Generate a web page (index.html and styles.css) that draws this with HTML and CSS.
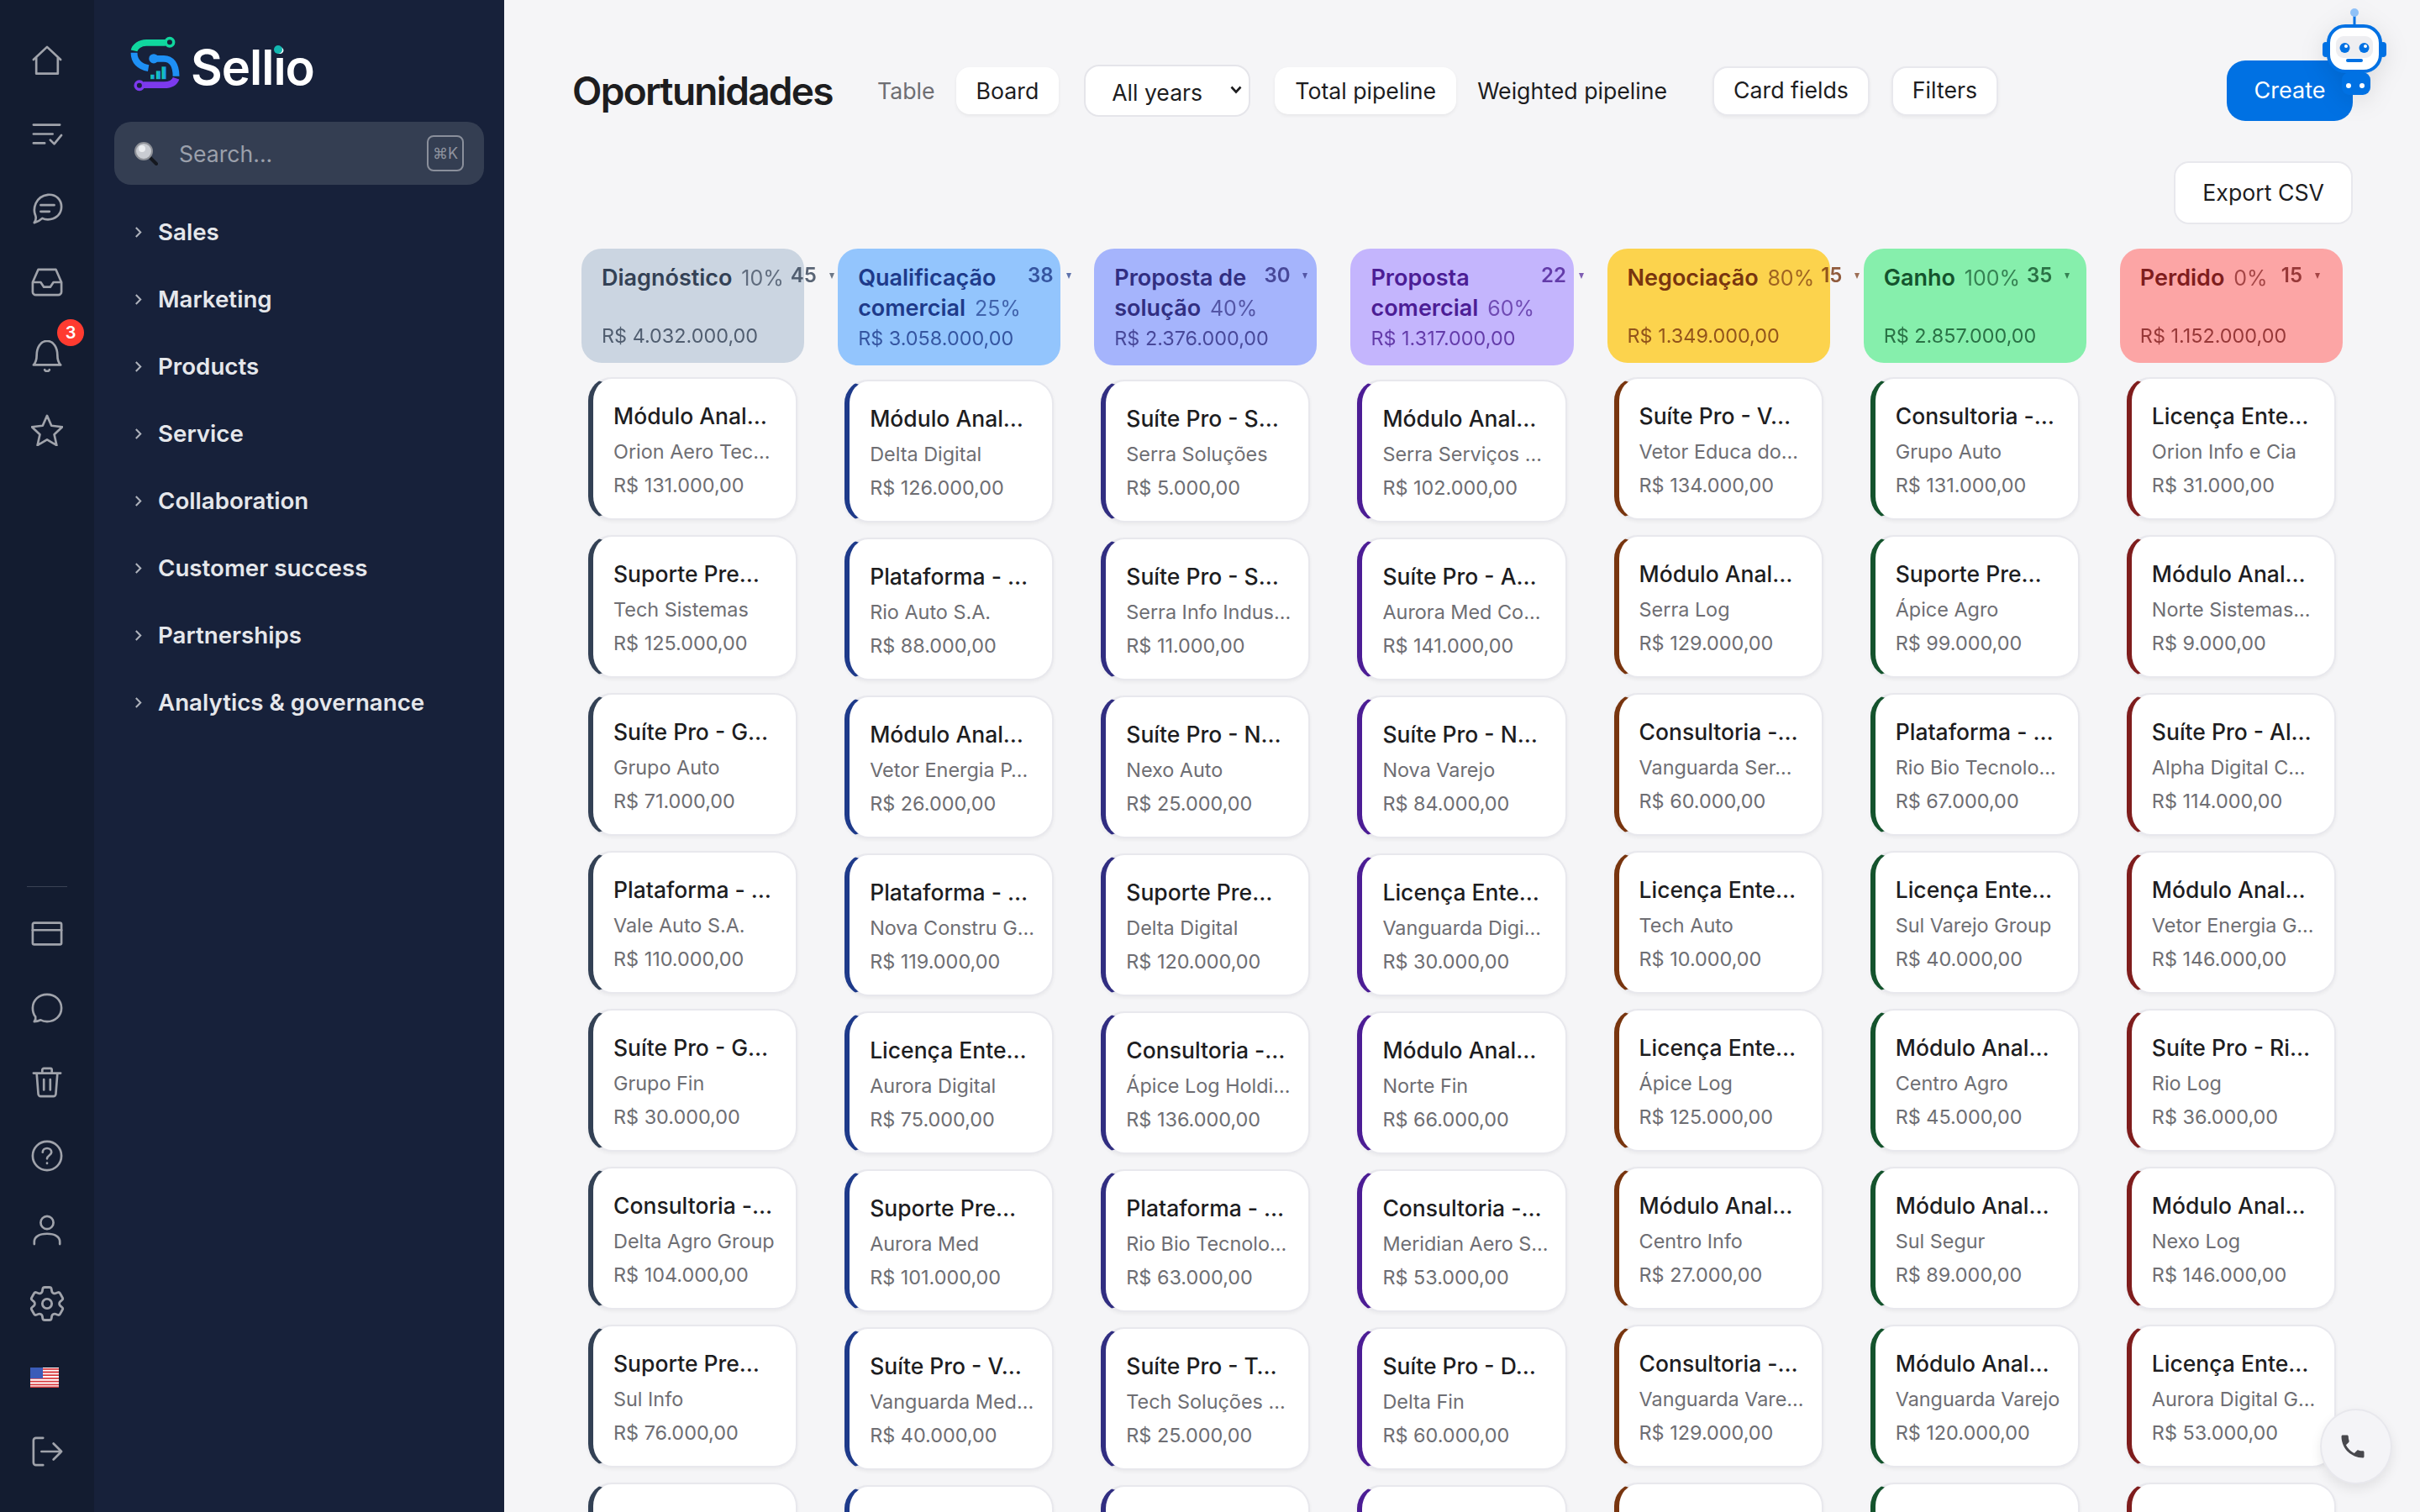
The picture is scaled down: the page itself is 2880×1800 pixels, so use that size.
FILE: index.html
```html
<!DOCTYPE html>
<html lang="pt-BR">
<head>
	<meta charset="UTF-8">
	<title>Oportunidades - Sellio</title>
	<link rel="stylesheet" href="styles.css">
</head>
<body>
<div class="app">
	<!-- icon rail -->
	<nav class="rail">
		<div class="rail-group">
			<a class="rail-btn"><svg viewBox="0 0 40 40"><path d="M3 19 20 3l17 16M6.500 16v20.500h27V16"/></svg></a>
			<a class="rail-btn"><svg viewBox="0 0 40 40"><path d="M3 8h33M3 19.500h24M3 31h14M24 27l5 5 9-11"/></svg></a>
			<a class="rail-btn"><svg viewBox="0 0 40 40"><path d="M4 38c2-3 2.500-6 1.500-9C2 21 5 5 21 3c11-1 17 7 17 15 0 10-8 16-17 16-3 0-5-.5-7-1.500-3 3-6 4.500-10 5.500z"/><path d="M12 16h17M12 24h11"/></svg></a>
			<a class="rail-btn"><svg viewBox="0 0 40 40"><path d="M2 20 9 4h22l7 16v12a4 4 0 0 1-4 4H6a4 4 0 0 1-4-4zM2 20h10l4 6h8l4-6h10"/></svg></a>
			<a class="rail-btn"><svg viewBox="0 0 40 40"><path d="M3 31c3-3 4-6 4-12C7 9 12 1 20 1s13 8 13 18c0 6 1 9 4 12zM17 37c1 2.500 5 2.500 6 0"/></svg><span class="badge">3</span></a>
			<a class="rail-btn"><svg viewBox="0 0 40 40"><path d="m20 2 5.500 12.500L39 16l-10 9.500 3 13.500-12-7-12 7 3-13.500L1 16l13.500-1.500z"/></svg></a>
		</div>
		<div class="rail-group rail-bottom">
			<div class="rail-line"></div>
			<a class="rail-btn"><svg viewBox="0 0 40 40"><rect x="2" y="6" width="36" height="27" rx="2"/><path d="M2 15h36"/></svg></a>
			<a class="rail-btn"><svg viewBox="0 0 40 40"><path d="M4 37c1.500-2 2-4 1.500-6C3 28 2 24 2 20 2 10 10 3 20 3s18 7 18 17-8 17-18 17c-3 0-6-.7-8-2-2 1-5 2-8 2z"/></svg></a>
			<a class="rail-btn"><svg viewBox="0 0 40 40"><path d="M3 9h34M14 8V5a2 2 0 0 1 2-2h8a2 2 0 0 1 2 2v3M7 9l2 26a3 3 0 0 0 3 3h16a3 3 0 0 0 3-3l2-26M16 17v13M24 17v13"/></svg></a>
			<a class="rail-btn"><svg viewBox="0 0 40 40"><circle cx="20" cy="20" r="18"/><path d="M14.500 15.500c0-3 2.500-5 5.500-5s5.500 2 5.500 5c0 4-5.500 4-5.500 8"/><path d="M20 29v.5"/></svg></a>
			<a class="rail-btn"><svg viewBox="0 0 40 40"><circle cx="20" cy="11" r="8"/><path d="M4 38v-3c0-6 6-10 16-10s16 4 16 10v3"/></svg></a>
			<a class="rail-btn rail-gear"><svg viewBox="0 0 24 24"><path d="M9.594 3.940c.09-.542.56-.94 1.110-.94h2.593c.55 0 1.020.398 1.110.94l.213 1.281c.063.374.313.686.645.87.074.04.147.083.22.127.325.196.72.257 1.075.124l1.217-.456a1.125 1.125 0 0 1 1.370.49l1.296 2.247a1.125 1.125 0 0 1-.26 1.431l-1.003.827c-.293.241-.438.613-.43.992a7.723 7.723 0 0 1 0 .255c-.008.378.137.75.43.991l1.004.827c.424.35.534.955.26 1.430l-1.298 2.247a1.125 1.125 0 0 1-1.369.491l-1.217-.456c-.355-.133-.75-.072-1.076.124a6.470 6.470 0 0 1-.22.128c-.331.183-.581.495-.644.869l-.213 1.281c-.09.543-.56.94-1.110.94h-2.594c-.55 0-1.019-.398-1.110-.94l-.213-1.281c-.062-.374-.312-.686-.644-.87a6.520 6.520 0 0 1-.22-.127c-.325-.196-.72-.257-1.076-.124l-1.217.456a1.125 1.125 0 0 1-1.369-.49l-1.297-2.247a1.125 1.125 0 0 1 .26-1.431l1.004-.827c.292-.24.437-.613.43-.991a6.932 6.932 0 0 1 0-.255c.007-.38-.138-.751-.43-.992l-1.004-.827a1.125 1.125 0 0 1-.26-1.430l1.297-2.247a1.125 1.125 0 0 1 1.370-.491l1.216.456c.356.133.751.072 1.076-.124.072-.044.146-.086.22-.128.332-.183.582-.495.644-.869l.214-1.280Z"/><circle cx="12" cy="12" r="2.600"/></svg></a>
			<a class="rail-btn rail-flag">
				<svg viewBox="0 0 34 24" preserveAspectRatio="none">
					<rect width="34" height="24" fill="#fff"/>
					<path d="M0 1.800h34M0 5.500h34M0 9.200h34M0 12.900h34M0 16.600h34M0 20.300h34M0 23.400h34" stroke="#d8383c" stroke-width="1.800"/>
					<rect width="15" height="13" fill="#3b5cb8"/>
				</svg>
			</a>
			<a class="rail-btn"><svg viewBox="0 0 40 40"><path d="M15 3H6a3 3 0 0 0-3 3v28a3 3 0 0 0 3 3h9M13 20h25M28 10l10 10-10 10"/></svg></a>
		</div>
	</nav>

	<!-- sidebar -->
	<aside class="side">
		<div class="logo">
			<svg class="logo-mark" viewBox="45 30 190 215">
				<defs>
					<linearGradient id="barfill" x1="0" y1="0" x2="1" y2="0">
						<stop offset="0" stop-color="#10d79e"/>
						<stop offset="1" stop-color="#1e90f5"/>
					</linearGradient>
				</defs>
				<g fill="none" stroke-width="25">
					<path d="M176 58H104C80 58 62 72 58 88" stroke="#10d79e"/>
					<circle cx="192" cy="56" r="15" stroke="#10d79e" stroke-width="11"/>
					<path d="M58 96C58 128 78 148 112 154" stroke="#1e90f5"/>
					<path d="M132 118H170C198 118 216 140 216 184" stroke="#1e90f5"/>
					<path d="M216 192C210 210 190 217 170 217H94" stroke="#7c3aed"/>
					<circle cx="78" cy="219" r="15" stroke="#7c3aed" stroke-width="11"/>
				</g>
				<circle cx="132" cy="118" r="18" fill="#1e90f5"/>
				<rect x="120" y="178" width="14" height="17" fill="url(#barfill)"/>
				<rect x="141" y="164" width="16" height="31" fill="url(#barfill)"/>
				<rect x="162" y="148" width="16" height="47" fill="url(#barfill)"/>
			</svg>
			<span class="logo-text">Sellio<i class="logo-dot"></i></span>
		</div>
		<div class="search">
			<svg class="search-ico" viewBox="0 0 28 28">
				<path d="m17 17 9 9" stroke="#15181f" stroke-width="4" stroke-linecap="round"/>
				<circle cx="11" cy="11" r="10" fill="#c9ccd2" stroke="#8d9097" stroke-width="2"/>
				<circle cx="9" cy="8" r="4" fill="#eceef1"/>
			</svg>
			<span class="search-text">Search...</span>
			<span class="kbd">⌘K</span>
		</div>
		<ul class="menu">
			<li><svg viewBox="0 0 10 16"><path d="m2 2 6 6-6 6"/></svg>Sales</li>
			<li><svg viewBox="0 0 10 16"><path d="m2 2 6 6-6 6"/></svg>Marketing</li>
			<li><svg viewBox="0 0 10 16"><path d="m2 2 6 6-6 6"/></svg>Products</li>
			<li><svg viewBox="0 0 10 16"><path d="m2 2 6 6-6 6"/></svg>Service</li>
			<li><svg viewBox="0 0 10 16"><path d="m2 2 6 6-6 6"/></svg>Collaboration</li>
			<li><svg viewBox="0 0 10 16"><path d="m2 2 6 6-6 6"/></svg>Customer success</li>
			<li><svg viewBox="0 0 10 16"><path d="m2 2 6 6-6 6"/></svg>Partnerships</li>
			<li><svg viewBox="0 0 10 16"><path d="m2 2 6 6-6 6"/></svg>Analytics &amp; governance</li>
		</ul>
	</aside>

	<main class="main">
		<div class="bar">
			<h1 class="title">Oportunidades</h1>
			<div class="seg seg-view">
				<a class="seg-item muted">Table</a>
				<a class="seg-item on">Board</a>
			</div>
			<div class="years-wrap">
				<select class="years"><option>All years</option></select>
				<svg class="years-arrow" viewBox="0 0 14 10"><path d="m1.500 1.500 5.500 6 5.500-6"/></svg>
			</div>
			<div class="seg seg-pipe">
				<a class="seg-item on">Total pipeline</a>
				<a class="seg-item">Weighted pipeline</a>
			</div>
			<a class="btn btn-fields">Card fields</a>
			<a class="btn btn-filters">Filters</a>
			<a class="create">Create</a>
		</div>
		<div class="export-row"><a class="btn btn-export">Export CSV</a></div>

		<div class="board">
			<section class="col col-slate">
				<header class="stage">
					<div class="stage-top">
						<div class="stage-name">Diagnóstico <span class="pct">10%</span></div>
						<span class="count">45</span><i class="caret"></i>
					</div>
					<div class="stage-sum">R$ 4.032.000,00</div>
				</header>
				<div class="card"><div class="c-name">Módulo Anal…</div><div class="c-org">Orion Aero Tec…</div><div class="c-val">R$ 131.000,00</div></div>
				<div class="card"><div class="c-name">Suporte Pre…</div><div class="c-org">Tech Sistemas</div><div class="c-val">R$ 125.000,00</div></div>
				<div class="card"><div class="c-name">Suíte Pro - G…</div><div class="c-org">Grupo Auto</div><div class="c-val">R$ 71.000,00</div></div>
				<div class="card"><div class="c-name">Plataforma - …</div><div class="c-org">Vale Auto S.A.</div><div class="c-val">R$ 110.000,00</div></div>
				<div class="card"><div class="c-name">Suíte Pro - G…</div><div class="c-org">Grupo Fin</div><div class="c-val">R$ 30.000,00</div></div>
				<div class="card"><div class="c-name">Consultoria -…</div><div class="c-org">Delta Agro Group</div><div class="c-val">R$ 104.000,00</div></div>
				<div class="card"><div class="c-name">Suporte Pre…</div><div class="c-org">Sul Info</div><div class="c-val">R$ 76.000,00</div></div>
				<div class="card"><div class="c-name">Suíte Pro - C…</div></div>
			</section>

			<section class="col col-blue">
				<header class="stage">
					<div class="stage-top">
						<div class="stage-name">Qualificação<br>comercial <span class="pct">25%</span></div>
						<span class="count">38</span><i class="caret"></i>
					</div>
					<div class="stage-sum">R$ 3.058.000,00</div>
				</header>
				<div class="card"><div class="c-name">Módulo Anal…</div><div class="c-org">Delta Digital</div><div class="c-val">R$ 126.000,00</div></div>
				<div class="card"><div class="c-name">Plataforma - …</div><div class="c-org">Rio Auto S.A.</div><div class="c-val">R$ 88.000,00</div></div>
				<div class="card"><div class="c-name">Módulo Anal…</div><div class="c-org">Vetor Energia P…</div><div class="c-val">R$ 26.000,00</div></div>
				<div class="card"><div class="c-name">Plataforma - …</div><div class="c-org">Nova Constru G…</div><div class="c-val">R$ 119.000,00</div></div>
				<div class="card"><div class="c-name">Licença Ente…</div><div class="c-org">Aurora Digital</div><div class="c-val">R$ 75.000,00</div></div>
				<div class="card"><div class="c-name">Suporte Pre…</div><div class="c-org">Aurora Med</div><div class="c-val">R$ 101.000,00</div></div>
				<div class="card"><div class="c-name">Suíte Pro - V…</div><div class="c-org">Vanguarda Med…</div><div class="c-val">R$ 40.000,00</div></div>
				<div class="card"></div>
			</section>

			<section class="col col-indigo">
				<header class="stage">
					<div class="stage-top">
						<div class="stage-name">Proposta de<br>solução <span class="pct">40%</span></div>
						<span class="count">30</span><i class="caret"></i>
					</div>
					<div class="stage-sum">R$ 2.376.000,00</div>
				</header>
				<div class="card"><div class="c-name">Suíte Pro - S…</div><div class="c-org">Serra Soluções</div><div class="c-val">R$ 5.000,00</div></div>
				<div class="card"><div class="c-name">Suíte Pro - S…</div><div class="c-org">Serra Info Indus…</div><div class="c-val">R$ 11.000,00</div></div>
				<div class="card"><div class="c-name">Suíte Pro - N…</div><div class="c-org">Nexo Auto</div><div class="c-val">R$ 25.000,00</div></div>
				<div class="card"><div class="c-name">Suporte Pre…</div><div class="c-org">Delta Digital</div><div class="c-val">R$ 120.000,00</div></div>
				<div class="card"><div class="c-name">Consultoria -…</div><div class="c-org">Ápice Log Holdi…</div><div class="c-val">R$ 136.000,00</div></div>
				<div class="card"><div class="c-name">Plataforma - …</div><div class="c-org">Rio Bio Tecnolo…</div><div class="c-val">R$ 63.000,00</div></div>
				<div class="card"><div class="c-name">Suíte Pro - T…</div><div class="c-org">Tech Soluções …</div><div class="c-val">R$ 25.000,00</div></div>
				<div class="card"></div>
			</section>

			<section class="col col-violet">
				<header class="stage">
					<div class="stage-top">
						<div class="stage-name">Proposta<br>comercial <span class="pct">60%</span></div>
						<span class="count">22</span><i class="caret"></i>
					</div>
					<div class="stage-sum">R$ 1.317.000,00</div>
				</header>
				<div class="card"><div class="c-name">Módulo Anal…</div><div class="c-org">Serra Serviços …</div><div class="c-val">R$ 102.000,00</div></div>
				<div class="card"><div class="c-name">Suíte Pro - A…</div><div class="c-org">Aurora Med Co…</div><div class="c-val">R$ 141.000,00</div></div>
				<div class="card"><div class="c-name">Suíte Pro - N…</div><div class="c-org">Nova Varejo</div><div class="c-val">R$ 84.000,00</div></div>
				<div class="card"><div class="c-name">Licença Ente…</div><div class="c-org">Vanguarda Digi…</div><div class="c-val">R$ 30.000,00</div></div>
				<div class="card"><div class="c-name">Módulo Anal…</div><div class="c-org">Norte Fin</div><div class="c-val">R$ 66.000,00</div></div>
				<div class="card"><div class="c-name">Consultoria -…</div><div class="c-org">Meridian Aero S…</div><div class="c-val">R$ 53.000,00</div></div>
				<div class="card"><div class="c-name">Suíte Pro - D…</div><div class="c-org">Delta Fin</div><div class="c-val">R$ 60.000,00</div></div>
				<div class="card"></div>
			</section>

			<section class="col col-amber">
				<header class="stage">
					<div class="stage-top">
						<div class="stage-name">Negociação <span class="pct">80%</span></div>
						<span class="count">15</span><i class="caret"></i>
					</div>
					<div class="stage-sum">R$ 1.349.000,00</div>
				</header>
				<div class="card"><div class="c-name">Suíte Pro - V…</div><div class="c-org">Vetor Educa do…</div><div class="c-val">R$ 134.000,00</div></div>
				<div class="card"><div class="c-name">Módulo Anal…</div><div class="c-org">Serra Log</div><div class="c-val">R$ 129.000,00</div></div>
				<div class="card"><div class="c-name">Consultoria -…</div><div class="c-org">Vanguarda Ser…</div><div class="c-val">R$ 60.000,00</div></div>
				<div class="card"><div class="c-name">Licença Ente…</div><div class="c-org">Tech Auto</div><div class="c-val">R$ 10.000,00</div></div>
				<div class="card"><div class="c-name">Licença Ente…</div><div class="c-org">Ápice Log</div><div class="c-val">R$ 125.000,00</div></div>
				<div class="card"><div class="c-name">Módulo Anal…</div><div class="c-org">Centro Info</div><div class="c-val">R$ 27.000,00</div></div>
				<div class="card"><div class="c-name">Consultoria -…</div><div class="c-org">Vanguarda Vare…</div><div class="c-val">R$ 129.000,00</div></div>
				<div class="card"><div class="c-name">Suíte Pro - O…</div></div>
			</section>

			<section class="col col-green">
				<header class="stage">
					<div class="stage-top">
						<div class="stage-name">Ganho <span class="pct">100%</span></div>
						<span class="count">35</span><i class="caret"></i>
					</div>
					<div class="stage-sum">R$ 2.857.000,00</div>
				</header>
				<div class="card"><div class="c-name">Consultoria -…</div><div class="c-org">Grupo Auto</div><div class="c-val">R$ 131.000,00</div></div>
				<div class="card"><div class="c-name">Suporte Pre…</div><div class="c-org">Ápice Agro</div><div class="c-val">R$ 99.000,00</div></div>
				<div class="card"><div class="c-name">Plataforma - …</div><div class="c-org">Rio Bio Tecnolo…</div><div class="c-val">R$ 67.000,00</div></div>
				<div class="card"><div class="c-name">Licença Ente…</div><div class="c-org">Sul Varejo Group</div><div class="c-val">R$ 40.000,00</div></div>
				<div class="card"><div class="c-name">Módulo Anal…</div><div class="c-org">Centro Agro</div><div class="c-val">R$ 45.000,00</div></div>
				<div class="card"><div class="c-name">Módulo Anal…</div><div class="c-org">Sul Segur</div><div class="c-val">R$ 89.000,00</div></div>
				<div class="card"><div class="c-name">Módulo Anal…</div><div class="c-org">Vanguarda Varejo</div><div class="c-val">R$ 120.000,00</div></div>
				<div class="card"><div class="c-name">Módulo Anal…</div></div>
			</section>

			<section class="col col-red">
				<header class="stage">
					<div class="stage-top">
						<div class="stage-name">Perdido <span class="pct">0%</span></div>
						<span class="count">15</span><i class="caret"></i>
					</div>
					<div class="stage-sum">R$ 1.152.000,00</div>
				</header>
				<div class="card"><div class="c-name">Licença Ente…</div><div class="c-org">Orion Info e Cia</div><div class="c-val">R$ 31.000,00</div></div>
				<div class="card"><div class="c-name">Módulo Anal…</div><div class="c-org">Norte Sistemas…</div><div class="c-val">R$ 9.000,00</div></div>
				<div class="card"><div class="c-name">Suíte Pro - Al…</div><div class="c-org">Alpha Digital C…</div><div class="c-val">R$ 114.000,00</div></div>
				<div class="card"><div class="c-name">Módulo Anal…</div><div class="c-org">Vetor Energia G…</div><div class="c-val">R$ 146.000,00</div></div>
				<div class="card"><div class="c-name">Suíte Pro - Ri…</div><div class="c-org">Rio Log</div><div class="c-val">R$ 36.000,00</div></div>
				<div class="card"><div class="c-name">Módulo Anal…</div><div class="c-org">Nexo Log</div><div class="c-val">R$ 146.000,00</div></div>
				<div class="card"><div class="c-name">Licença Ente…</div><div class="c-org">Aurora Digital G…</div><div class="c-val">R$ 53.000,00</div></div>
				<div class="card"><div class="c-name">Suíte Pro - T…</div></div>
			</section>
		</div>
	</main>
</div>

<!-- floating assistant + phone -->
<svg class="robot" viewBox="0 0 76 105">
	<path d="M38 8v12" stroke="#0071e3" stroke-width="3"/>
	<circle cx="38" cy="5" r="5" fill="#8fc1f7"/>
	<rect x="0" y="40" width="8" height="18" rx="4" fill="#0071e3"/>
	<rect x="68" y="40" width="8" height="18" rx="4" fill="#0071e3"/>
	<rect x="23" y="76" width="34" height="27" rx="9" fill="#0071e3"/>
	<rect x="7" y="21" width="62" height="54" rx="20" fill="#fff" stroke="#0071e3" stroke-width="4"/>
	<rect x="16" y="33" width="44" height="26" rx="9" fill="#eeeef1"/>
	<circle cx="26.500" cy="47" r="6" fill="#0071e3"/>
	<circle cx="49.500" cy="47" r="6" fill="#0071e3"/>
	<circle cx="28" cy="45" r="2" fill="#fff"/>
	<circle cx="51" cy="45" r="2" fill="#fff"/>
	<rect x="28" y="60" width="20" height="4" rx="2" fill="#0071e3"/>
	<circle cx="31" cy="92" r="3" fill="#fff"/>
	<circle cx="47" cy="92" r="3" fill="#fff"/>
</svg>
<a class="phone">
	<svg viewBox="0 0 24 24"><path d="M6.620 10.790c1.440 2.830 3.760 5.140 6.590 6.590l2.200-2.200c.27-.27.67-.36 1.020-.24 1.120.37 2.330.57 3.570.57.55 0 1 .45 1 1V20c0 .55-.45 1-1 1-9.390 0-17-7.610-17-17 0-.55.45-1 1-1h3.500c.55 0 1 .45 1 1 0 1.250.2 2.450.57 3.570.11.35.03.74-.25 1.020l-2.200 2.200z"/></svg>
</a>
</body>
</html>
```

FILE: styles.css
```css
*{
	box-sizing: border-box;
}
html,body{
	margin: 0;
	padding: 0;
	height: 100%;
	overflow: hidden;
}
body{
	font-family: Inter, "Noto Sans", "Liberation Sans", sans-serif;
	background: #f5f5f7;
	color: #1d1d1f;
}
.app{
	display: flex;
	height: 100vh;
}

/* rail */
.rail{
	width: 112px;
	flex: none;
	background: #131c30;
	padding: 48px 0;
	display: flex;
	flex-direction: column;
	justify-content: space-between;
	align-items: center;
}
.rail-group{
	display: flex;
	flex-direction: column;
	align-items: center;
	gap: 40px;
}
.rail-line{
	width: 48px;
	height: 1px;
	background: #3a4254;
	margin-bottom: -8px;
}
.rail-btn{
	position: relative;
	display: flex;
	align-items: center;
	justify-content: center;
	width: 48px;
	height: 48px;
}
.rail-btn svg{
	width: 38px;
	height: 38px;
	fill: none;
	stroke: #a0a3ab;
	stroke-width: 2.800;
	stroke-linecap: round;
	stroke-linejoin: round;
}
.rail-gear svg{
	flex: none;
	width: 52px;
	height: 52px;
	stroke-width: 1.300;
}
.rail-flag{
	justify-content: flex-start;
}
.rail-flag svg{
	width: 34px;
	height: 24px;
	margin-left: 4px;
	stroke: none;
	stroke-linecap: butt;
}
.badge{
	position: absolute;
	top: -20px;
	right: -20px;
	width: 32px;
	height: 32px;
	border-radius: 50%;
	background: #ff3b30;
	color: #fff;
	font-size: 20px;
	font-weight: 600;
	line-height: 32px;
	text-align: center;
}

/* sidebar */
.side{
	width: 488px;
	flex: none;
	background: #17213a;
	padding: 0 24px;
}
.logo{
	height: 145px;
	padding: 42px 0 0 19px;
	display: flex;
	align-items: flex-start;
	gap: 11px;
}
.logo-mark{
	width: 61px;
	height: 68px;
	flex: none;
}
.logo-text{
	position: relative;
	margin-top: 3px;
	font-size: 58px;
	font-weight: 600;
	line-height: 70px;
	letter-spacing: -1px;
	color: #fff;
}
.logo-dot{
	position: absolute;
	right: 38px;
	top: 9px;
	width: 10px;
	height: 10px;
	border-radius: 50%;
	background: #12b7b0;
}
.search{
	height: 75px;
	border-radius: 20px;
	background: #343e52;
	display: flex;
	align-items: center;
	padding: 0 24px;
}
.search-ico{
	width: 28px;
	height: 28px;
	flex: none;
}
.search-text{
	margin-left: 25px;
	font-size: 26.600px;
	color: #9ba0ab;
	flex: 1;
}
.kbd{
	width: 44px;
	height: 43px;
	border: 2px solid #8a8f9b;
	border-radius: 8px;
	font-size: 18px;
	line-height: 39px;
	text-align: center;
	color: #8f939f;
}
.menu{
	list-style: none;
	margin: 16px 0 0;
	padding: 0;
}
.menu li{
	height: 80px;
	display: flex;
	align-items: center;
	gap: 19px;
	padding-left: 24px;
	font-size: 27.700px;
	font-weight: 600;
	color: #e5e7eb;
}
.menu svg{
	width: 9px;
	height: 15px;
	flex: none;
	fill: none;
	stroke: #aeb2bb;
	stroke-width: 2.300;
}

/* main */
.main{
	flex: 1;
	min-width: 0;
	padding: 72px 80px 0 81px;
	overflow: hidden;
}
.bar{
	display: flex;
	align-items: center;
	height: 72px;
}
.title{
	margin: 0;
	font-size: 46px;
	font-weight: 600;
	letter-spacing: -1.700px;
	color: #1d1d1f;
	white-space: nowrap;
}
.seg{
	display: flex;
	gap: 1px;
}
.seg-view{
	margin-left: 29px;
}
.seg-pipe{
	margin-left: 29px;
}
.seg-item{
	height: 56px;
	line-height: 56px;
	padding: 0 24px;
	border-radius: 16px;
	font-size: 26.700px;
	white-space: nowrap;
}
.seg-item.on{
	background: #fff;
	box-shadow: 0 2px 4px rgba(0,0,0,0.06);
}
.muted{
	color: #6e6e73;
}
.years-wrap{
	position: relative;
	margin-left: 30px;
	height: 62px;
}
.years{
	appearance: none;
	display: block;
	width: 198px;
	height: 62px;
	padding: 4px 0 0 31px;
	border: 2px solid #e5e5ea;
	border-radius: 18px;
	background: #fff;
	font: 26.600px Inter, sans-serif;
	color: #1d1d1f;
}
.years-arrow{
	position: absolute;
	right: 10px;
	top: 25px;
	width: 14px;
	height: 10px;
	fill: none;
	stroke: #1d1d1f;
	stroke-width: 2.600;
}
.btn{
	display: block;
	border: 2px solid #e8e8ed;
	border-radius: 18px;
	background: #fff;
	font-size: 26.700px;
	white-space: nowrap;
}
.btn-fields,.btn-filters{
	height: 59px;
	line-height: 53px;
	padding: 0 23px;
	box-shadow: 0 2px 4px rgba(0,0,0,0.05);
}
.btn-fields{
	margin-left: 30px;
}
.btn-filters{
	margin-left: 26px;
}
.create{
	margin-left: auto;
	width: 150px;
	height: 72px;
	line-height: 72px;
	text-align: center;
	border-radius: 22px;
	background: #0071e3;
	color: #fff;
	font-size: 27px;
}
.export-row{
	display: flex;
	justify-content: flex-end;
	margin-top: 48px;
}
.btn-export{
	height: 75px;
	line-height: 71px;
	padding: 0 32px;
}

/* board */
.board{
	display: grid;
	grid-template-columns: repeat(7, 1fr);
	gap: 40px;
	margin: 29px 12px 0 11px;
	align-items: start;
}
.col{
	display: flex;
	flex-direction: column;
	gap: 18px;
	min-width: 0;
}
.stage{
	margin-bottom: -1px;
	padding: 17px 24px 16px;
	border-radius: 24px;
	background: var(--bg);
	color: var(--ink);
}
.stage-top{
	display: flex;
	align-items: flex-start;
	min-height: 69px;
	white-space: nowrap;
}
.stage-name{
	flex: none;
	min-width: 160px;
	font-size: 27px;
	font-weight: 600;
	line-height: 36px;
}
.pct{
	margin-left: 4px;
	font-size: 25px;
	font-weight: 400;
	opacity: 0.7;
}
.count{
	flex: none;
	margin-left: 8px;
	font-size: 24px;
	font-weight: 600;
	line-height: 30px;
	opacity: 0.8;
}
.caret{
	flex: none;
	margin: 12px 0 0 15px;
	width: 0;
	height: 0;
	border-left: 3.500px solid transparent;
	border-right: 3.500px solid transparent;
	border-top: 7px solid var(--ink);
	opacity: 0.7;
}
.stage-sum{
	margin-top: 2px;
	font-size: 23.400px;
	line-height: 32px;
	opacity: 0.8;
}
.card{
	flex: none;
	height: 170px;
	margin: 0 8px;
	padding: 26px 12px 0 24px;
	background: #fff;
	border: 2px solid #e8e8ed;
	border-left: 6px solid var(--ink);
	border-radius: 28px;
	box-shadow: 0 2px 4px rgba(0,0,0,0.05);
	white-space: nowrap;
	overflow: hidden;
}
.c-name{
	font-size: 26.500px;
	font-weight: 500;
	line-height: 36px;
}
.c-org{
	margin-top: 9px;
	font-size: 23.400px;
	line-height: 32px;
	color: #6e6e73;
}
.c-val{
	margin-top: 8px;
	font-size: 23.400px;
	line-height: 32px;
	color: #6e6e73;
}
.col-slate{ --bg: #cbd5e1; --ink: #334155; }
.col-blue{ --bg: #93c5fd; --ink: #1e3a8a; }
.col-indigo{ --bg: #a5b4fc; --ink: #312e81; }
.col-violet{ --bg: #c4b5fd; --ink: #4c1d95; }
.col-amber{ --bg: #fcd34d; --ink: #78350f; }
.col-green{ --bg: #86efac; --ink: #14532d; }
.col-red{ --bg: #fca5a5; --ink: #7f1d1d; }

/* floating */
.robot{
	position: absolute;
	top: 10px;
	right: 40px;
	width: 76px;
	height: 105px;
	filter: drop-shadow(0 6px 14px rgba(0,0,0,0.10));
}
.phone{
	position: absolute;
	left: 2761px;
	top: 1677px;
	width: 86px;
	height: 90px;
	border-radius: 50%;
	background: #f4f4f7;
	border: 2px solid #e8e8ed;
	box-shadow: 0 6px 14px rgba(0,0,0,0.08);
	display: flex;
	align-items: center;
	justify-content: center;
}
.phone svg{
	width: 36px;
	height: 36px;
	margin: 0 8px 0 0;
	fill: #48484d;
}
```
